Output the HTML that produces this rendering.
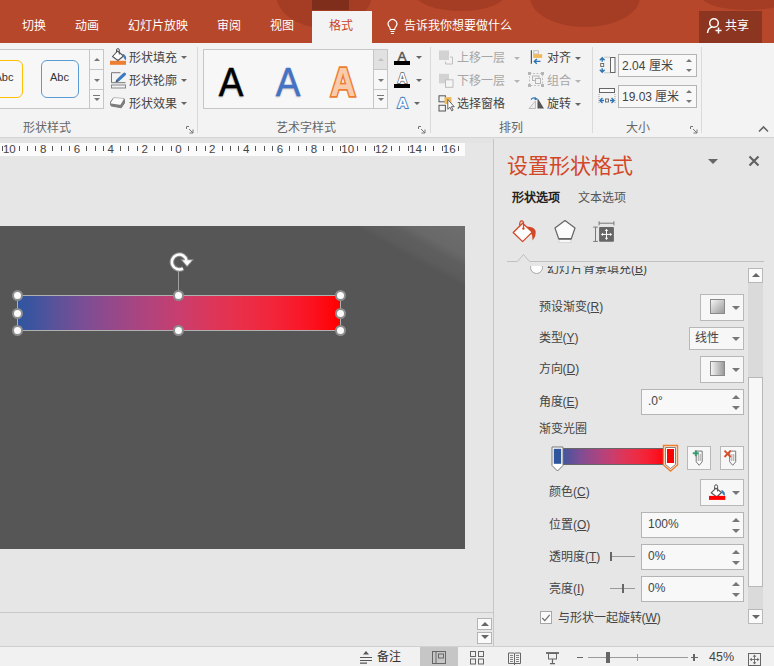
<!DOCTYPE html>
<html lang="zh-CN">
<head>
<meta charset="utf-8">
<title>PowerPoint</title>
<style>
*{box-sizing:border-box;margin:0;padding:0}
html,body{width:774px;height:666px;overflow:hidden;background:#e6e6e6}
body{font-family:"Liberation Sans",sans-serif;font-size:12px;color:#444;position:relative;line-height:1}
.a{position:absolute}
.t{position:absolute;white-space:nowrap;line-height:14px;height:14px;font-size:12px}
/* title bar */
#title{left:0;top:0;width:774px;height:43px;background:#b7472a;overflow:hidden}
#title .t{color:#fff;top:19px}
.blob{position:absolute;background:#a53d24;border-radius:50%}
/* ribbon */
#ribbon{left:0;top:43px;width:774px;height:95px;background:#f3f3f3;border-bottom:1px solid #d4d4d4}
.sep{position:absolute;top:47px;width:1px;height:86px;background:#dadada}
.glabel{color:#666}
.dis{color:#a6a6a6}
.dd{position:absolute;width:0;height:0;border-left:3px solid transparent;border-right:3px solid transparent;border-top:3px solid #666}
.dd.dis{border-top-color:#b5b5b5}
.gal{position:absolute;background:#f7f7f7;border:1px solid #c6c6c6}
.spin{position:absolute;background:#f8f8f8;border:1px solid #b4b4b4}
.btn{position:absolute;background:#f7f7f7;border:1px solid #b8b8b8}
/* panel */
#panel{left:493px;top:139px;width:281px;height:507px;background:#e6e6e6;border-left:1px solid #c6c6c6}
#status{left:0;top:646px;width:774px;height:20px;background:#f1f1f1;border-top:1px solid #d0d0d0}
#ruler i{position:absolute;top:2.500px;width:1px;height:5.500px;background:#555}
#ruler b{position:absolute;top:0;width:20px;text-align:center;font-weight:normal;font-size:11.500px;line-height:12px;color:#444}
.h{position:absolute;width:11px;height:11px;border-radius:50%;background:#fbfbfb;border:2px solid #8e8e8e}
.wa{top:59px;width:40px;text-align:center;font-size:41px;line-height:46px;transform:scaleX(.9)}
.j{display:inline-block;text-align:justify;text-align-last:justify;vertical-align:top;white-space:nowrap}
</style>
</head>
<body>
<!-- ===== TITLE BAR ===== -->
<div id="title" class="a">
  <div class="blob" style="left:276px;top:-12px;width:96px;height:40px;border-radius:0 0 48px 48px / 0 0 34px 34px"></div>
  <div class="blob" style="left:413px;top:-12px;width:95px;height:23px;border-radius:0 0 47px 47px / 0 0 20px 20px"></div>
  <div class="blob" style="left:530px;top:-10px;width:110px;height:37px;border-radius:0 0 55px 55px / 0 0 30px 30px"></div>
  <div class="blob" style="left:702px;top:-16px;width:90px;height:26px"></div>
  <div class="a" style="left:312px;top:0;width:37px;height:10px;background:#7f2e1c"></div>
  <div class="a" style="left:312px;top:11px;width:60px;height:32px;background:#f3f3f3"></div>
  <div class="a" style="left:699px;top:11px;width:63px;height:32px;background:#8c3520"></div>
  <span class="t" style="left:22px"><span class="j" style="width:24px">切换</span></span>
  <span class="t" style="left:75px"><span class="j" style="width:24px">动画</span></span>
  <span class="t" style="left:128px"><span class="j" style="width:60px">幻灯片放映</span></span>
  <span class="t" style="left:217px"><span class="j" style="width:24px">审阅</span></span>
  <span class="t" style="left:270px"><span class="j" style="width:24px">视图</span></span>
  <span class="t" style="left:329px;color:#c8452a"><span class="j" style="width:24px">格式</span></span>
  <span class="t" style="left:404px"><span class="j" style="width:108px">告诉我你想要做什么</span></span>
  <span class="t" style="left:725px"><span class="j" style="width:24px">共享</span></span>
  <svg class="a" style="left:386px;top:18px" width="13" height="18" viewBox="0 0 13 18"><path d="M4.300 11.500 Q4.300 9.800 3 8.300 A4.300 4.300 0 1 1 10 8.300 Q8.700 9.800 8.700 11.500 Z" fill="none" stroke="#fff" stroke-width="1.200"/><path d="M4.500 13.500 H8.500 M5 15.500 H8" stroke="#fff" stroke-width="1.200"/></svg>
  <svg class="a" style="left:706px;top:16.500px" width="17" height="18" viewBox="0 0 17 18"><circle cx="8" cy="6" r="4.300" fill="none" stroke="#fff" stroke-width="1.500"/><path d="M1.500 16 Q2 10.500 6.500 10" fill="none" stroke="#fff" stroke-width="1.500"/><path d="M12.500 10.500 V16.500 M9.500 13.500 H15.500" stroke="#fff" stroke-width="1.500"/></svg>
</div>

<!-- ===== RIBBON ===== -->
<div id="ribbon" class="a"></div>
<!-- shape styles group -->
<div class="gal" style="left:-6px;top:49px;width:110px;height:60px"></div>
<div class="a" style="left:89px;top:49px;width:15px;height:60px;border:1px solid #c6c6c6;background:#f7f7f7"></div>
<div class="a" style="left:90px;top:69px;width:13px;height:1px;background:#c6c6c6"></div>
<div class="a" style="left:90px;top:89px;width:13px;height:1px;background:#c6c6c6"></div>
<div class="dd" style="left:94px;top:58px;transform:rotate(180deg);border-top-color:#777"></div>
<div class="dd" style="left:94px;top:79px;border-top-color:#777"></div>
<div class="a" style="left:93px;top:95px;width:7px;height:1px;background:#777"></div>
<div class="dd" style="left:94px;top:98px;border-top-color:#777"></div>
<div class="a" style="left:-15px;top:60px;width:38px;height:38px;border:1.5px solid #ffc000;border-radius:6px"></div>
<span class="t" style="left:-5.500px;top:70px;font-size:11px;color:#333">Abc</span>
<div class="a" style="left:41px;top:60px;width:38px;height:38px;border:1.5px solid #5b9bd5;border-radius:6px"></div>
<span class="t" style="left:50px;top:70px;font-size:11px;color:#333">Abc</span>
<!-- fill / outline / effects -->
<svg class="a" style="left:109px;top:48px" width="20" height="18" viewBox="0 0 20 18"><rect x="1" y="12.800" width="16" height="4" fill="#ed7d31"/><path d="M3.500 8.500 L8.500 3 L14.500 8 L9 12.500 Z" fill="#fff" stroke="#555" stroke-width="1.100" stroke-linejoin="round"/><path d="M7.500 4.500 V2 a1.400 1.400 0 0 1 2.800 0 V6.500" fill="none" stroke="#555" stroke-width="1"/><path d="M13.800 5.800 q4.200 1.800 3.200 6.400 q-2.800-1.400 -3.200-6.400 z" fill="#3b7bbf"/></svg>
<span class="t" style="left:128.5px;top:51px"><span class="j" style="width:48px">形状填充</span></span><div class="dd" style="left:180.500px;top:56px"></div>
<svg class="a" style="left:109px;top:71px" width="20" height="18" viewBox="0 0 20 18"><path d="M11.500 1.700 H2.500 V11.700 H16.500" fill="none" stroke="#777" stroke-width="1"/><rect x="2.500" y="14" width="14" height="3" fill="#f3f3f3" stroke="#888" stroke-width="1"/><path d="M6.500 11.300 L7.700 8.200 L14.300 2 a1.400 1.400 0 0 1 2.300 2.200 L10 10.300 Z" fill="#3b7bbf"/><path d="M6.500 11.300 L7.500 8.700 L9.500 10.400 Z" fill="#555"/></svg>
<span class="t" style="left:128.5px;top:74px"><span class="j" style="width:48px">形状轮廓</span></span><div class="dd" style="left:180.500px;top:79px"></div>
<svg class="a" style="left:109px;top:94px" width="20" height="18" viewBox="0 0 20 18"><path d="M4.500 4 L14.500 4.500 Q15.500 4.600 15.500 5.800 V9 L12.300 13.800 L2.500 12 Q1.300 11.600 1.500 10.300 V8 Z" fill="#7d7d7d" stroke="#7d7d7d" stroke-width="1" stroke-linejoin="round"/><path d="M4.800 4 L14.300 4.500 Q15.200 4.700 14.600 5.600 L11.800 10.200 Q11.400 10.800 10.500 10.700 L2.300 9.600 Q1.300 9.300 1.900 8.400 Z" fill="#fbfbfb"/></svg>
<span class="t" style="left:128.5px;top:97px"><span class="j" style="width:48px">形状效果</span></span><div class="dd" style="left:180.500px;top:102px"></div>
<span class="t glabel" style="left:23px;top:121px"><span class="j" style="width:48px">形状样式</span></span>
<svg class="a" style="left:186px;top:126px" width="8" height="8" viewBox="0 0 8 8"><path d="M0.500 3 V0.500 H3 M3 3 L7 7 M7 3.500 V7 H3.500" fill="none" stroke="#777" stroke-width="1"/></svg>
<div class="sep" style="left:197px"></div>
<!-- wordart group -->
<div class="gal" style="left:203px;top:49px;width:185px;height:60px"></div>
<div class="a" style="left:373px;top:49px;width:15px;height:60px;border:1px solid #c6c6c6;background:#f7f7f7"></div>
<div class="a" style="left:374px;top:50px;width:13px;height:19px;background:#e1e1e1"></div>
<div class="a" style="left:374px;top:69px;width:13px;height:1px;background:#c6c6c6"></div>
<div class="a" style="left:374px;top:89px;width:13px;height:1px;background:#c6c6c6"></div>
<div class="dd" style="left:378px;top:58px;transform:rotate(180deg);border-top-color:#c0c0c0"></div>
<div class="dd" style="left:378px;top:79px;border-top-color:#777"></div>
<div class="a" style="left:377px;top:95px;width:7px;height:1px;background:#777"></div>
<div class="dd" style="left:378px;top:98px;border-top-color:#777"></div>
<span class="a wa" style="left:211px;color:#000;-webkit-text-stroke:.5px #000;text-shadow:0 1px 2px rgba(0,0,0,.4)">A</span>
<span class="a wa" style="left:267.500px;color:#4472c4;-webkit-text-stroke:.5px #4472c4;text-shadow:0 1px 2px rgba(0,0,0,.3)">A</span>
<span class="a wa" style="left:323px;font-weight:bold;color:#f8cbad;-webkit-text-stroke:3.400px #ed7d31;paint-order:stroke fill;transform:scaleX(.85)">A</span>
<span class="a" style="left:397.500px;top:49.500px;font-size:13.500px;line-height:14px;color:#555;-webkit-text-stroke:.5px #555">A</span>
<div class="a" style="left:394px;top:61.400px;width:16px;height:3.600px;background:#000"></div><div class="dd" style="left:415.600px;top:56px"></div>
<span class="a" style="left:397px;top:69.500px;font-size:14.500px;line-height:16px;font-weight:bold;color:#fff;-webkit-text-stroke:1.500px #666;paint-order:stroke fill;transform:scaleX(.92)">A</span>
<div class="a" style="left:394px;top:84px;width:16px;height:3.600px;background:#000"></div><div class="dd" style="left:415.600px;top:79px"></div>
<span class="a" style="left:396.500px;top:94px;font-size:15.500px;line-height:17px;font-weight:bold;color:#fff;-webkit-text-stroke:2px #3b7bbf;paint-order:stroke fill;text-shadow:0 0 2.500px #7fb0e0;transform:scaleX(.95)">A</span><div class="dd" style="left:414px;top:102px"></div>
<span class="t glabel" style="left:276px;top:121px"><span class="j" style="width:60px">艺术字样式</span></span>
<svg class="a" style="left:418px;top:126px" width="8" height="8" viewBox="0 0 8 8"><path d="M0.500 3 V0.500 H3 M3 3 L7 7 M7 3.500 V7 H3.500" fill="none" stroke="#777" stroke-width="1"/></svg>
<div class="sep" style="left:430px"></div>
<!-- arrange group -->
<svg class="a" style="left:438px;top:50px" width="17" height="16" viewBox="0 0 17 16"><rect x="1" y="0.500" width="10" height="9.500" fill="#d2d2d2"/><path d="M12 7 H14.500 V14 H7.500 V11.500" fill="none" stroke="#c0c0c0" stroke-width="1"/></svg>
<span class="t dis" style="left:457px;top:51px"><span class="j" style="width:48px">上移一层</span></span><div class="dd dis" style="left:514px;top:57px"></div>
<svg class="a" style="left:438px;top:72.500px" width="17" height="16" viewBox="0 0 17 16"><rect x="1" y="0.800" width="10" height="9.500" fill="#d2d2d2"/><rect x="7.500" y="6.800" width="7.500" height="7.500" fill="#f5f5f5" stroke="#bdbdbd" stroke-width="1"/></svg>
<span class="t dis" style="left:457px;top:74px"><span class="j" style="width:48px">下移一层</span></span><div class="dd dis" style="left:514px;top:80px"></div>
<svg class="a" style="left:437.500px;top:95px" width="18" height="18" viewBox="0 0 18 18"><rect x="1" y="0.800" width="6.400" height="6" fill="none" stroke="#555"/><rect x="1" y="10.300" width="6.400" height="5.700" fill="none" stroke="#555"/><rect x="6.600" y="2.100" width="6.900" height="6.800" fill="#f0b95a"/><path d="M9.800 4.500 V14.300 L12 12.200 L13.700 15.800 L15.100 15.100 L13.400 11.700 H16.200 Z" fill="#fff" stroke="#555" stroke-width=".9" stroke-linejoin="round"/></svg>
<span class="t" style="left:457px;top:97px"><span class="j" style="width:48px">选择窗格</span></span>
<svg class="a" style="left:530px;top:49px" width="16" height="17" viewBox="0 0 16 17"><path d="M1.400 1.200 V14.800" stroke="#555" stroke-width="1.200"/><rect x="3.800" y="1.700" width="4.500" height="3.300" fill="#f3f3f3" stroke="#b8b8b8" stroke-width=".9"/><rect x="3.200" y="5.200" width="9" height="3.700" fill="#f0b95a"/><path d="M10.500 12.400 H4.500 M6.800 10 L4.300 12.400 L6.800 14.800" fill="none" stroke="#2e74b5" stroke-width="1.400"/></svg>
<span class="t" style="left:547px;top:51px"><span class="j" style="width:24px">对齐</span></span><div class="dd" style="left:575px;top:57px"></div>
<svg class="a" style="left:527px;top:71px" width="18" height="17" viewBox="0 0 18 17"><rect x="2.500" y="2.500" width="13" height="12" fill="none" stroke="#c2c2c2" stroke-dasharray="2 1.500"/><rect x="1" y="1" width="3" height="3" fill="#b5b5b5"/><rect x="14" y="1" width="3" height="3" fill="#b5b5b5"/><rect x="1" y="13" width="3" height="3" fill="#b5b5b5"/><rect x="14" y="13" width="3" height="3" fill="#b5b5b5"/><rect x="5.500" y="5" width="6.500" height="4.500" fill="none" stroke="#b5b5b5"/><rect x="8.500" y="7.500" width="5" height="5" fill="#f3f3f3" stroke="#b5b5b5"/></svg>
<span class="t dis" style="left:547px;top:74px"><span class="j" style="width:24px">组合</span></span><div class="dd dis" style="left:575px;top:80px"></div>
<svg class="a" style="left:527px;top:95px" width="18" height="17" viewBox="0 0 18 17"><path d="M10.500 3 V13.500 H17 Z" fill="#555"/><path d="M8.500 6 V13.500 H2 Z" fill="#eee" stroke="#b0b0b0" stroke-width=".8"/><path d="M4 4.500 q2.500-3 5.500-.5" fill="none" stroke="#2e74b5" stroke-width="1.200"/><path d="M8 2 L10.500 4.500 L7.500 5.200z" fill="#2e74b5"/></svg>
<span class="t" style="left:547px;top:97px"><span class="j" style="width:24px">旋转</span></span><div class="dd" style="left:575px;top:103px"></div>
<span class="t glabel" style="left:499px;top:121px"><span class="j" style="width:24px">排列</span></span>
<div class="sep" style="left:592px"></div>
<!-- size group -->
<svg class="a" style="left:598px;top:55px" width="18" height="22" viewBox="0 0 18 22"><rect x="12.500" y="2.500" width="4.500" height="15" fill="#fafafa" stroke="#666"/><path d="M4.200 3 V6.800 M1.800 5.200 L4.200 2.700 L6.600 5.200 M4.200 13.200 V17 M1.800 14.800 L4.200 17.300 L6.600 14.800" fill="none" stroke="#2e74b5" stroke-width="1.400"/><rect x="2.700" y="8.500" width="3" height="3" fill="none" stroke="#666" stroke-width=".9"/><path d="M6.500 2.200 H12 M6.500 17.800 H12" stroke="#888" stroke-width=".8" stroke-dasharray="1 1"/></svg>
<div class="spin" style="left:618px;top:54px;width:79px;height:23px"></div>
<span class="t" style="left:622px;top:59px">2.04 <span class="j" style="width:24px">厘米</span></span>
<div class="dd" style="left:685.500px;top:59px;transform:rotate(180deg);border-top-color:#777"></div><div class="dd" style="left:685.500px;top:69px;border-top-color:#777"></div>
<svg class="a" style="left:598px;top:86px" width="20" height="20" viewBox="0 0 20 20"><rect x="1.500" y="2.500" width="15" height="4" fill="#fafafa" stroke="#666"/><path d="M2 14.500 H6 M4.500 12 L1.800 14.500 L4.500 17 M12 14.500 H16 M13.500 12 L16.200 14.500 L13.500 17" fill="none" stroke="#2e74b5" stroke-width="1.300"/><rect x="7.500" y="13" width="3" height="3" fill="none" stroke="#666" stroke-width=".9"/><path d="M1 8 V18 M17 8 V18" stroke="#888" stroke-width=".8" stroke-dasharray="1 1"/></svg>
<div class="spin" style="left:618px;top:85px;width:79px;height:23px"></div>
<span class="t" style="left:622px;top:90px">19.03 <span class="j" style="width:24px">厘米</span></span>
<div class="dd" style="left:685.500px;top:90px;transform:rotate(180deg);border-top-color:#777"></div><div class="dd" style="left:685.500px;top:100px;border-top-color:#777"></div>
<span class="t glabel" style="left:626px;top:121px"><span class="j" style="width:24px">大小</span></span>
<svg class="a" style="left:690px;top:126px" width="8" height="8" viewBox="0 0 8 8"><path d="M0.500 3 V0.500 H3 M3 3 L7 7 M7 3.500 V7 H3.500" fill="none" stroke="#777" stroke-width="1"/></svg>
<div class="sep" style="left:701px"></div>
<svg class="a" style="left:758px;top:125px" width="11" height="8" viewBox="0 0 11 8"><path d="M1 6.500 L5.500 2 L10 6.500" fill="none" stroke="#666" stroke-width="1.600"/></svg>

<!-- ===== WORK AREA ===== -->
<div id="work" class="a" style="left:0;top:139px;width:493px;height:507px;background:#e6e6e6"></div>
<div class="a" style="left:0;top:138px;width:774px;height:5px;background:#e3e3e3"></div>
<div id="ruler" class="a" style="left:0;top:143px;width:465px;height:13px;background:#fbfbfb;overflow:hidden"><i style="left:1.5px"></i><i style="left:18.5px"></i><i style="left:26.9px"></i><i style="left:35.4px"></i><i style="left:52.3px"></i><i style="left:60.8px"></i><i style="left:69.2px"></i><i style="left:86.1px"></i><i style="left:94.6px"></i><i style="left:103.1px"></i><i style="left:120.0px"></i><i style="left:128.4px"></i><i style="left:136.9px"></i><i style="left:153.8px"></i><i style="left:162.3px"></i><i style="left:170.7px"></i><i style="left:187.7px"></i><i style="left:196.1px"></i><i style="left:204.6px"></i><i style="left:221.5px"></i><i style="left:230.0px"></i><i style="left:238.4px"></i><i style="left:255.3px"></i><i style="left:263.8px"></i><i style="left:272.3px"></i><i style="left:289.2px"></i><i style="left:297.6px"></i><i style="left:306.1px"></i><i style="left:323.0px"></i><i style="left:331.5px"></i><i style="left:339.9px"></i><i style="left:356.9px"></i><i style="left:365.3px"></i><i style="left:373.8px"></i><i style="left:390.7px"></i><i style="left:399.2px"></i><i style="left:407.6px"></i><i style="left:424.5px"></i><i style="left:433.0px"></i><i style="left:441.5px"></i><i style="left:458.4px"></i><b style="left:-0.7px">10</b><b style="left:33.1px">8</b><b style="left:67.0px">6</b><b style="left:100.8px">4</b><b style="left:134.7px">2</b><b style="left:168.5px">0</b><b style="left:202.3px">2</b><b style="left:236.2px">4</b><b style="left:270.0px">6</b><b style="left:303.9px">8</b><b style="left:337.7px">10</b><b style="left:371.5px">12</b><b style="left:405.4px">14</b><b style="left:439.2px">16</b></div>
<!-- slide -->
<div id="slide" class="a" style="left:0;top:226px;width:465px;height:323px;background:#565656;overflow:hidden">
  <div class="a" style="left:0;top:0;width:465px;height:323px;background:linear-gradient(209deg,rgba(255,255,255,.14) 0px,rgba(255,255,255,.11) 27px,rgba(255,255,255,.05) 36px,rgba(255,255,255,.035) 47px,rgba(255,255,255,0) 54px)"></div>
</div>
<!-- shape -->
<div class="a" style="left:17px;top:295px;width:324px;height:36px;border:1px solid #b0b0b0;background:linear-gradient(90deg,#30559f 0%,#3f549f 5%,#54539b 10%,#7a4e95 20%,#974889 30%,#b0437e 40%,#c83e6e 50%,#dc365a 60%,#ea2e48 70%,#f32438 80%,#fa1424 90%,#ff0000 100%)"></div>
<div class="a" style="left:178px;top:271px;width:1px;height:20px;background:#a0a0a0"></div>
<svg class="a" style="left:165px;top:249px" width="32" height="26" viewBox="165 249 32 26"><path d="M183 268.400 A7.400 7.400 0 1 1 186.600 260.700" fill="none" stroke="#8e8e8e" stroke-width="4.600"/><path d="M180.300 259.300 H194 L187.100 267.300 Z" fill="#8e8e8e"/><path d="M183 268.400 A7.400 7.400 0 1 1 186.600 260.700" fill="none" stroke="#fdfdfd" stroke-width="2.500"/><path d="M182.300 260.200 H192 L187.100 265.800 Z" fill="#fdfdfd"/></svg>
<div class="h" style="left:12px;top:290px"></div><div class="h" style="left:173px;top:290px"></div><div class="h" style="left:335px;top:290px"></div>
<div class="h" style="left:12px;top:307.500px"></div><div class="h" style="left:335px;top:307.500px"></div>
<div class="h" style="left:12px;top:325px"></div><div class="h" style="left:173px;top:325px"></div><div class="h" style="left:335px;top:325px"></div>
<!-- notes splitter + scroll buttons -->
<div class="a" style="left:0;top:612px;width:493px;height:1px;background:#c8c8c8"></div>
<div class="btn" style="left:477px;top:617.500px;width:15px;height:12.500px;background:#fafafa;border-color:#b4b4b4"></div><div class="dd" style="left:482px;top:622px;transform:rotate(180deg);border-top-color:#666;border-width:4px 4px 0 4px;border-left-width:4px;border-right-width:4px;border-top-width:4px;left:481px"></div>
<div class="btn" style="left:477px;top:631.500px;width:15px;height:12.500px;background:#fafafa;border-color:#b4b4b4"></div><div class="dd" style="left:481px;top:635px;border-top-color:#666;border-left-width:4px;border-right-width:4px;border-top-width:4px"></div>

<!-- ===== PANEL ===== -->
<div id="panel" class="a"></div>
<span class="a" style="left:507px;top:153px;font-size:21px;line-height:26px;color:#d24726;white-space:nowrap"><span class="j" style="width:126px">设置形状格式</span></span>
<div class="dd" style="left:707.500px;top:159px;border-left-width:5px;border-right-width:5px;border-top-width:5.500px;border-top-color:#666"></div>
<svg class="a" style="left:748px;top:155px" width="12" height="12" viewBox="0 0 12 12"><path d="M1.500 1.500 L10.500 10.500 M10.500 1.500 L1.500 10.500" stroke="#606060" stroke-width="2.100"/></svg>
<span class="t" style="left:512px;top:191px;font-weight:bold;color:#222"><span class="j" style="width:48px">形状选项</span></span>
<span class="t" style="left:578px;top:191px;color:#555"><span class="j" style="width:48px">文本选项</span></span>
<!-- tab icons -->
<svg class="a" style="left:511px;top:218px" width="28" height="27" viewBox="0 0 28 27"><path d="M16 8.500 Q23.500 8.800 24.600 13 Q25.300 18 21.600 22.500 Q21.800 17.500 19.800 14.800 Z" fill="#d24726"/><path d="M2.200 14.500 L11.600 5.200 L21.200 14.100 L11.600 23.600 Z" fill="#fdfdfd" stroke="#d24726" stroke-width="1.300" stroke-linejoin="round"/><path d="M8.600 7.600 Q8.600 2.800 10.800 2.800 Q12.600 2.800 12.500 5.500 V10.500" fill="none" stroke="#d24726" stroke-width="1.200"/><circle cx="12.400" cy="10.600" r="1.200" fill="#d24726"/></svg>
<svg class="a" style="left:551.500px;top:218.300px" width="26" height="27" viewBox="0 0 26 27"><path d="M6.800 24.500 L7.500 21 H18.500 L19.200 24.500 Z" fill="#f8f8f8" stroke="#c8c8c8" stroke-width=".6"/><path d="M13 2.500 L23 10 L19.300 20.800 H6.700 L3 10 Z" fill="#fbfbfb" stroke="#666" stroke-width="1.200" stroke-linejoin="round"/><path d="M6.700 20.800 H19.300" stroke="#666" stroke-width="1.600"/></svg>
<svg class="a" style="left:592px;top:219px" width="26" height="26" viewBox="0 0 26 26"><path d="M7.100 4.200 H21.900 M7.100 2.300 V6.300 M21.900 2.300 V6.300" stroke="#777" stroke-width="1"/><path d="M3.500 8.100 V22.400 M1.200 8.100 H5.800 M1.200 22.400 H5.800" stroke="#777" stroke-width="1"/><rect x="7.100" y="8.100" width="14.800" height="14.600" rx=".8" fill="#666"/><path d="M14.500 10.800 V20 M9.900 15.400 H19.100" stroke="#fff" stroke-width="1"/><path d="M14.500 9.800 L16.200 12 H12.800 Z M14.500 21 L16.200 18.800 H12.800 Z M8.900 15.400 L11.100 13.700 V17.100 Z M20.100 15.400 L17.900 13.700 V17.100 Z" fill="#fff"/></svg>
<svg class="a" style="left:507px;top:253px" width="257" height="10" viewBox="0 0 257 10"><path d="M0 8.500 H10.500 L16.500 1.500 L22.500 8.500 H258" fill="none" stroke="#c0c0c0" stroke-width="1"/></svg>
<!-- clipped row -->
<div class="a" style="left:507px;top:266px;width:240px;height:12px;overflow:hidden">
  <div class="a" style="left:23px;top:-5px;width:13px;height:13px;border-radius:50%;background:#fdfdfd;border:1px solid #a8a8a8"></div>
  <span class="t" style="left:40px;top:-4px"><span class="j" style="width:84px">幻灯片背景填充</span>(<u>B</u>)</span>
</div>
<!-- scrollbar -->
<div class="a" style="left:748px;top:268px;width:15px;height:355px;background:#dadada"></div>
<div class="btn" style="left:748px;top:268px;width:15px;height:15px;background:#fafafa"></div><div class="dd" style="left:751.500px;top:273px;transform:rotate(180deg);border-left-width:4px;border-right-width:4px;border-top-width:4px;border-top-color:#666"></div>
<div class="btn" style="left:748px;top:609px;width:15px;height:15px;background:#fafafa"></div><div class="dd" style="left:751.500px;top:615px;border-left-width:4px;border-right-width:4px;border-top-width:4px;border-top-color:#666"></div>
<div class="a" style="left:748px;top:377px;width:15px;height:210px;background:#f7f7f7;border:1px solid #b8b8b8"></div>
<!-- rows -->
<span class="t" style="left:538.500px;top:300px"><span class="j" style="width:48px">预设渐变</span>(<u>R</u>)</span>
<div class="btn" style="left:700px;top:294px;width:44px;height:27px"></div>
<div class="a" style="left:710px;top:299px;width:15px;height:15px;border:1px solid #8a8a8a;background:linear-gradient(135deg,#f4f4f4,#9a9a9a)"></div><div class="dd" style="left:732px;top:306px;border-left-width:4.200px;border-right-width:4.200px;border-top-width:4.500px;border-top-color:#777"></div>
<span class="t" style="left:538.500px;top:331px"><span class="j" style="width:24px">类型</span>(<u>Y</u>)</span>
<div class="btn" style="left:689px;top:327px;width:55px;height:23px"></div>
<span class="t" style="left:695px;top:331px"><span class="j" style="width:24px">线性</span></span><div class="dd" style="left:732px;top:337px;border-left-width:4.200px;border-right-width:4.200px;border-top-width:4.500px;border-top-color:#777"></div>
<span class="t" style="left:538.500px;top:362px"><span class="j" style="width:24px">方向</span>(<u>D</u>)</span>
<div class="btn" style="left:700px;top:356px;width:44px;height:27px"></div>
<div class="a" style="left:710px;top:361px;width:15px;height:15px;border:1px solid #8a8a8a;background:linear-gradient(90deg,#f4f4f4,#9a9a9a)"></div><div class="dd" style="left:732px;top:368px;border-left-width:4.200px;border-right-width:4.200px;border-top-width:4.500px;border-top-color:#777"></div>
<span class="t" style="left:538.500px;top:395px"><span class="j" style="width:24px">角度</span>(<u>E</u>)</span>
<div class="spin" style="left:641px;top:389px;width:103px;height:26px"></div>
<span class="t" style="left:648px;top:394px">.0°</span>
<div class="dd" style="left:731.700px;top:395px;transform:rotate(180deg);border-left-width:4.200px;border-right-width:4.200px;border-top-width:4.500px;border-top-color:#777"></div><div class="dd" style="left:731.700px;top:406px;border-left-width:4.200px;border-right-width:4.200px;border-top-width:4.500px;border-top-color:#777"></div>
<span class="t" style="left:538.500px;top:422px"><span class="j" style="width:48px">渐变光圈</span></span>
<!-- gradient stops bar -->
<div class="a" style="left:556px;top:448px;width:112px;height:17px;border:1px solid #666;background:linear-gradient(90deg,#30559f 0%,#3f549f 5%,#54539b 10%,#7a4e95 20%,#974889 30%,#b0437e 40%,#c83e6e 50%,#dc365a 60%,#ea2e48 70%,#f32438 80%,#fa1424 90%,#ff0000 100%)"></div>
<svg class="a" style="left:550.500px;top:445.500px" width="13" height="26" viewBox="0 0 13 26"><path d="M1 1 H12 V19.500 L6.500 25 L1 19.500 Z" fill="#fff" stroke="#777" stroke-width="1"/><rect x="2.800" y="2.800" width="7.400" height="15" fill="#2f559f"/></svg>
<svg class="a" style="left:662px;top:444px" width="17" height="28" viewBox="0 0 17 28"><path d="M1.500 1.500 H15.500 V21 L8.500 27 L1.500 21 Z" fill="#fde9d9" stroke="#ed7d31" stroke-width="1.400"/><path d="M3.500 3.500 H13.500 V20.500 L8.500 24.500 L3.500 20.500 Z" fill="#fff" stroke="#666" stroke-width=".8"/><rect x="5" y="5" width="7" height="14" fill="#ff0000"/></svg>
<div class="btn" style="left:687px;top:446px;width:24px;height:24px"></div>
<svg class="a" style="left:690px;top:449px" width="18" height="18" viewBox="0 0 18 18"><path d="M6.200 2.100 H12.200 V12.800 L9.200 16.300 L6.200 12.800 Z" fill="#fbfbfb" stroke="#777" stroke-width="1"/><path d="M8.300 5 V12 M10.200 5 V12" stroke="#b0b0b0" stroke-width="1.200"/><path d="M5.800 1.200 V7.200 M2.800 4.200 H8.800" stroke="#3a9a72" stroke-width="1.900"/></svg>
<div class="btn" style="left:720px;top:446px;width:24px;height:24px"></div>
<svg class="a" style="left:723px;top:449px" width="18" height="18" viewBox="0 0 18 18"><path d="M6.700 2.100 H12.700 V12.800 L9.700 16.300 L6.700 12.800 Z" fill="#fbfbfb" stroke="#777" stroke-width="1"/><path d="M8.800 5 V12 M10.700 5 V12" stroke="#b0b0b0" stroke-width="1.200"/><path d="M1.500 1.700 L7.700 8 M7.700 1.700 L1.500 8" stroke="#d2502e" stroke-width="1.800"/></svg>
<span class="t" style="left:549px;top:485px"><span class="j" style="width:24px">颜色</span>(<u>C</u>)</span>
<div class="btn" style="left:700px;top:479px;width:44px;height:27px"></div>
<svg class="a" style="left:707px;top:483px" width="20" height="20" viewBox="0 0 20 20"><path d="M4.200 9.800 L9 5.200 L14.500 9.500 L9.800 14 Z" fill="#fff" stroke="#555" stroke-width="1.100" stroke-linejoin="round"/><path d="M7.600 6.500 V3.300 a1.500 1.500 0 0 1 3 0 V8.500" fill="none" stroke="#555" stroke-width="1"/><path d="M14.300 6.800 q4.500 1.800 3.500 6 q-2.800-1 -3.500-6z" fill="#3b7bbf"/><rect x="2" y="12.900" width="16.300" height="4" fill="#ff0000"/></svg>
<div class="dd" style="left:732px;top:491px;border-left-width:4.200px;border-right-width:4.200px;border-top-width:4.500px;border-top-color:#777"></div>
<span class="t" style="left:549px;top:518px"><span class="j" style="width:24px">位置</span>(<u>O</u>)</span>
<div class="spin" style="left:641px;top:512px;width:103px;height:26px"></div>
<span class="t" style="left:648px;top:517px">100%</span>
<div class="dd" style="left:731.700px;top:518px;transform:rotate(180deg);border-left-width:4.200px;border-right-width:4.200px;border-top-width:4.500px;border-top-color:#777"></div><div class="dd" style="left:731.700px;top:529px;border-left-width:4.200px;border-right-width:4.200px;border-top-width:4.500px;border-top-color:#777"></div>
<span class="t" style="left:549px;top:550px"><span class="j" style="width:36px">透明度</span>(<u>T</u>)</span>
<div class="a" style="left:610px;top:556px;width:25px;height:1px;background:#999"></div><div class="a" style="left:610px;top:552px;width:2px;height:9px;background:#666"></div>
<div class="spin" style="left:641px;top:544px;width:103px;height:26px"></div>
<span class="t" style="left:648px;top:549px">0%</span>
<div class="dd" style="left:731.700px;top:550px;transform:rotate(180deg);border-left-width:4.200px;border-right-width:4.200px;border-top-width:4.500px;border-top-color:#777"></div><div class="dd" style="left:731.700px;top:561px;border-left-width:4.200px;border-right-width:4.200px;border-top-width:4.500px;border-top-color:#777"></div>
<span class="t" style="left:549px;top:582px"><span class="j" style="width:24px">亮度</span>(<u>I</u>)</span>
<div class="a" style="left:610px;top:588px;width:25px;height:1px;background:#999"></div><div class="a" style="left:622px;top:584px;width:2px;height:9px;background:#666"></div>
<div class="spin" style="left:641px;top:576px;width:103px;height:26px"></div>
<span class="t" style="left:648px;top:581px">0%</span>
<div class="dd" style="left:731.700px;top:582px;transform:rotate(180deg);border-left-width:4.200px;border-right-width:4.200px;border-top-width:4.500px;border-top-color:#777"></div><div class="dd" style="left:731.700px;top:593px;border-left-width:4.200px;border-right-width:4.200px;border-top-width:4.500px;border-top-color:#777"></div>
<div class="a" style="left:539.500px;top:611px;width:12.500px;height:12.500px;background:#fbfbfb;border:1px solid #a6a6a6"></div>
<svg class="a" style="left:541px;top:612.500px" width="10" height="10" viewBox="0 0 10 10"><path d="M1.300 5 L3.800 7.600 L8.700 1.800" fill="none" stroke="#6e6e6e" stroke-width="1.200"/></svg>
<span class="t" style="left:557.500px;top:611px"><span class="j" style="width:84px">与形状一起旋转</span>(<u>W</u>)</span>

<!-- ===== STATUS BAR ===== -->
<div id="status" class="a"></div>
<svg class="a" style="left:359px;top:650px" width="14" height="14" viewBox="0 0 14 14"><path d="M7 1 L10 4.500 H4 Z" fill="#555"/><path d="M1 7.500 H13 M1 10.500 H13 M1 13.200 H8" stroke="#555" stroke-width="1.200"/></svg>
<span class="t" style="left:377px;top:650px;color:#333"><span class="j" style="width:24px">备注</span></span>
<div class="a" style="left:420px;top:647px;width:38px;height:19px;background:#c6c6c6"></div>
<svg class="a" style="left:432px;top:651px" width="15" height="14" viewBox="0 0 15 14"><rect x="0.500" y="0.500" width="13" height="12" fill="none" stroke="#666"/><path d="M4 0.500 V12.500" stroke="#666"/><rect x="6.500" y="3" width="5" height="4" fill="none" stroke="#666"/></svg>
<svg class="a" style="left:470px;top:651px" width="15" height="14" viewBox="0 0 15 14"><rect x="0.500" y="0.500" width="5" height="5" fill="none" stroke="#666"/><rect x="8.500" y="0.500" width="5" height="5" fill="none" stroke="#666"/><rect x="0.500" y="8" width="5" height="5" fill="none" stroke="#666"/><rect x="8.500" y="8" width="5" height="5" fill="none" stroke="#666"/></svg>
<svg class="a" style="left:508px;top:650.500px" width="14" height="15" viewBox="0 0 14 15"><path d="M0.500 2 H5.500 Q6.500 2 6.500 3 V12.500 H0.500 Z M12.500 2 H7.500 Q6.500 2 6.500 3 V12.500 H12.500 Z" fill="none" stroke="#666"/><path d="M2 4.500 H5 M2 6.500 H5 M2 8.500 H5 M2 10.500 H5 M8 4.500 H11 M8 6.500 H11 M8 8.500 H11 M8 10.500 H11" stroke="#666" stroke-width=".8"/><path d="M6.500 12.500 V14" stroke="#666"/></svg>
<svg class="a" style="left:546px;top:651.500px" width="13" height="13" viewBox="0 0 13 13"><path d="M0 1 H13" stroke="#666" stroke-width="1.800"/><rect x="2.500" y="1.500" width="8" height="5.500" fill="none" stroke="#666"/><path d="M6.500 7 V11.500 M4 11.700 H9" stroke="#666" stroke-width="1.200"/></svg>
<div class="a" style="left:577px;top:656.500px;width:6px;height:1.500px;background:#666"></div>
<div class="a" style="left:588px;top:657px;width:100px;height:1px;background:#9a9a9a"></div>
<div class="a" style="left:637px;top:654px;width:1px;height:7px;background:#9a9a9a"></div>
<div class="a" style="left:606px;top:651.500px;width:4px;height:11px;background:#666"></div>
<div class="a" style="left:690.500px;top:656.500px;width:7px;height:1.500px;background:#666"></div><div class="a" style="left:693.300px;top:653.800px;width:1.500px;height:7px;background:#666"></div>
<span class="t" style="left:709px;top:650px;color:#444;font-size:12.500px">45%</span>
<svg class="a" style="left:748px;top:653px" width="13" height="13" viewBox="0 0 13 13"><rect x="0.500" y="0.500" width="12" height="12" fill="none" stroke="#666"/><path d="M6.500 2.500 V10.500 M2.500 6.500 H10.500" stroke="#666" stroke-width=".9"/><path d="M6.500 1.500 L8.300 3.800 H4.700 Z M6.500 11.500 L8.300 9.200 H4.700 Z M1.500 6.500 L3.800 4.700 V8.300 Z M11.500 6.500 L9.200 4.700 V8.300 Z" fill="#666"/></svg>
</body>
</html>
